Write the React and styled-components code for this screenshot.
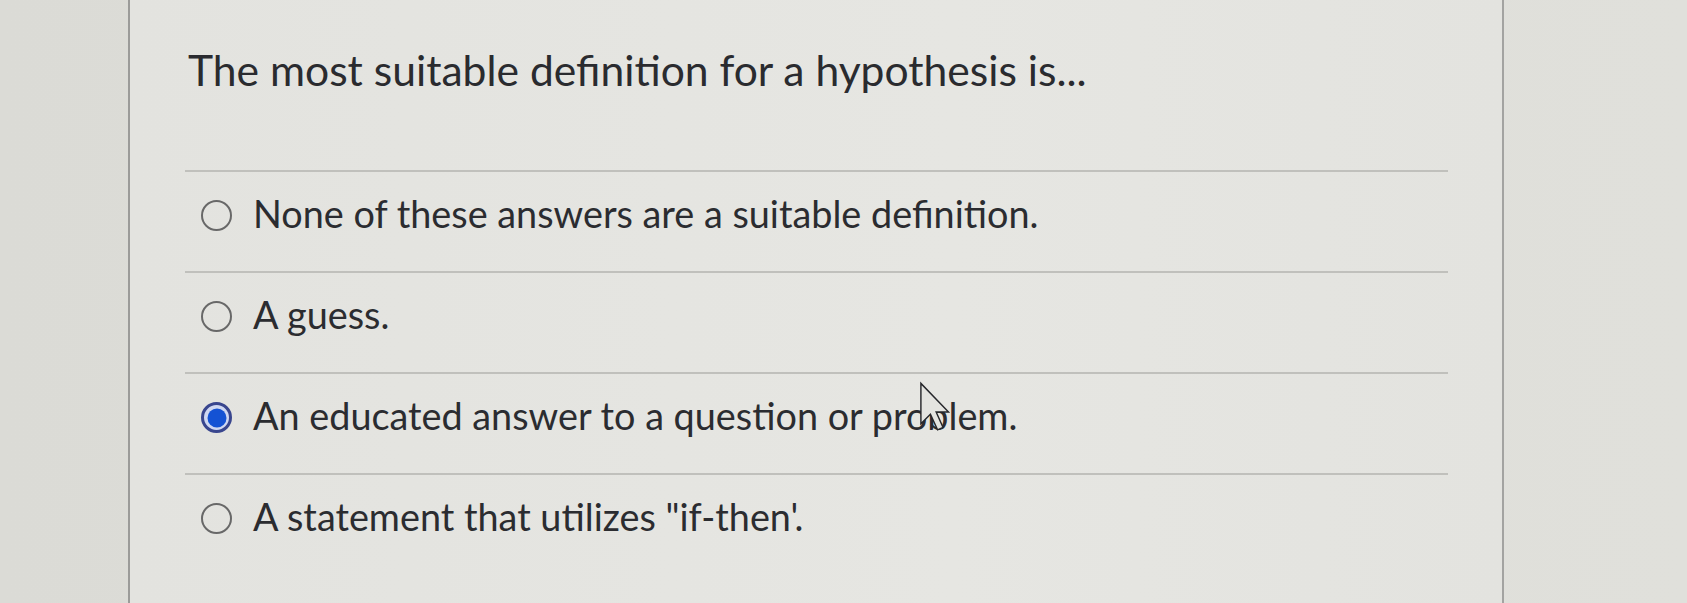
import React from "react";
import styled, { createGlobalStyle } from "styled-components";

const GlobalStyle = createGlobalStyle`
  html, body {
    margin: 0;
    padding: 0;
    background: #dcdcd7;
  }
  * { box-sizing: border-box; }
`;

const Page = styled.div`
  position: relative;
  width: 1687px;
  height: 603px;
  overflow: hidden;
  padding-left: 128px;
  background: linear-gradient(90deg, #dbdbd6 0%, #e0e0db 100%);
  font-family: Lato, "Open Sans", "Liberation Sans", sans-serif;
  color: #2b2c30;
`;

const Card = styled.section`
  width: 1376px;
  height: 100%;
  border-left: 2px solid #9b9b99;
  border-right: 2px solid #a3a3a1;
  background: linear-gradient(90deg, #e3e3df 0%, #e6e6e2 60%, #e3e3df 100%);
  padding: 44px 54px 0 55px;
`;

const Title = styled.h1`
  margin: 0 0 74px 3px;
  font-size: 42.6px;
  line-height: 52px;
  font-weight: 400;
  letter-spacing: 0;
  color: #2a2b2f;
`;

const OptionList = styled.div`
  display: flex;
  flex-direction: column;
`;

const Option = styled.label`
  display: flex;
  align-items: flex-start;
  gap: 21px;
  height: 101px;
  border-top: 2px solid #c0c0bc;
  padding: 20px 0 0 16px;
`;

const Radio = styled.span`
  position: relative;
  flex: none;
  width: 31px;
  height: 31px;
  margin-top: 8px;
  border-radius: 50%;
  border: ${(p) => (p.$checked ? "3px solid #39468e" : "2.5px solid #686868")};
  background: ${(p) => (p.$checked ? "#cfd7f2" : "transparent")};

  &::after {
    content: "";
    display: ${(p) => (p.$checked ? "block" : "none")};
    position: absolute;
    left: 50%;
    top: 50%;
    width: 19px;
    height: 19px;
    border-radius: 50%;
    background: #1452d4;
    transform: translate(-50%, -50%);
  }
`;

const OptionText = styled.span`
  font-size: 37.8px;
  line-height: 44px;
  color: #2b2c30;
`;

const Cursor = styled.svg`
  position: absolute;
  left: 918px;
  top: 381px;
  width: 32px;
  height: 50px;
  overflow: visible;
`;

const options = [
  { text: "None of these answers are a suitable definition.", checked: false },
  { text: "A guess.", checked: false },
  { text: "An educated answer to a question or problem.", checked: true },
  { text: "A statement that utilizes \"if-then'.", checked: false },
];

export default function App() {
  return (
    <>
      <GlobalStyle />
      <Page>
        <Card>
          <Title>The most suitable definition for a hypothesis is...</Title>
          <OptionList>
            {options.map((o) => (
              <Option key={o.text}>
                <Radio $checked={o.checked} />
                <OptionText>{o.text}</OptionText>
              </Option>
            ))}
          </OptionList>
        </Card>
        <Cursor viewBox="0 0 13 21">
          <path
            d="M1 1 L1 18 L5 14 L8 20.5 L10.3 19.5 L7.4 13 L12.6 13 Z"
            fill="#e4e4e0"
            stroke="#26272b"
            strokeWidth="0.6"
            strokeLinejoin="miter"
          />
        </Cursor>
      </Page>
    </>
  );
}
